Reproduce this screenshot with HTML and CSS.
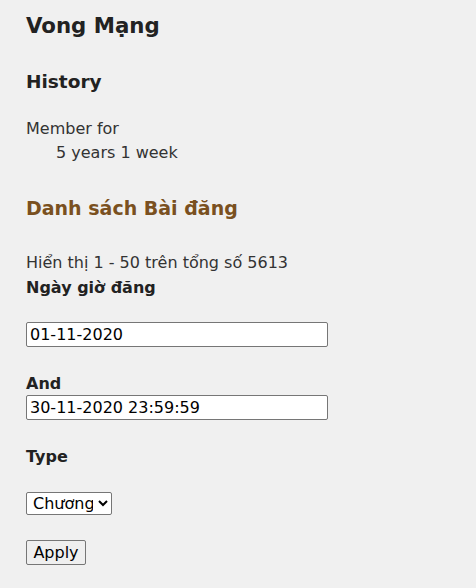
FILE: index.html
```html
<!DOCTYPE html>
<html lang="vi">
<head>
<meta charset="utf-8">
<title>Vong Mạng</title>
<link rel="stylesheet" href="styles.css">
</head>
<body>
<main class="page">
  <h1 class="title">Vong Mạng</h1>
  <h2 class="section-title">History</h2>
  <dl class="history">
    <dt>Member for</dt>
    <dd>5 years 1 week</dd>
  </dl>
  <h2 class="section-title brown">Danh sách Bài đăng</h2>
  <p class="count">Hiển thị 1 - 50 trên tổng số 5613</p>
  <form class="filter">
    <label class="label" for="from">Ngày giờ đăng</label>
    <input class="field field-gap" id="from" type="text" value="01-11-2020">
    <label class="label" for="to">And</label>
    <input class="field field-tight" id="to" type="text" value="30-11-2020 23:59:59">
    <label class="label label-type" for="type">Type</label>
    <select class="select" id="type"><option>Chương</option></select>
    <button class="button" type="button">Apply</button>
  </form>
</main>
</body>
</html>
```
FILE: styles.css
```css
html, body {
  margin: 0;
  padding: 0;
  background: #f0f0f0;
}
body {
  font-family: "DejaVu Sans", Verdana, sans-serif;
  font-size: 16px;
  color: #333;
}
.page {
  padding: 12px 26px 20px;
  display: flex;
  flex-direction: column;
  align-items: flex-start;
}
.title {
  margin: 0;
  font-size: 21.3px;
  line-height: 28px;
  color: #222;
}
.section-title {
  margin: 29px 0 0;
  font-size: 18.5px;
  line-height: 26px;
  color: #222;
}
.brown {
  color: #7a5020;
  font-size: 19px;
  margin-top: 30px;
}
.history {
  margin: 22px 0 0;
  line-height: 24px;
}
.history dt { margin: 0; }
.history dd { margin: 0 0 0 30px; }
.count {
  margin: 29px 0 0;
  line-height: 25px;
}
.filter {
  display: flex;
  flex-direction: column;
  align-items: flex-start;
}
.label {
  font-weight: bold;
  line-height: 25px;
  color: #222;
}
.field {
  font-family: "DejaVu Sans", Verdana, sans-serif;
  font-size: 16px;
  color: #000;
  width: 302px;
  height: 25px;
  box-sizing: border-box;
  margin: 0;
  padding: 1px 3px;
  border: 1px solid #767676;
  border-radius: 2px;
  background: #fff;
}
.field-gap { margin: 22px 0 24px; }
.field-tight { margin-top: -1px; }
.label-type { margin-top: 24px; }
.select {
  font-family: "DejaVu Sans", Verdana, sans-serif;
  font-size: 16px;
  color: #000;
  margin: 23px 0 0;
  height: 23px;
  width: 86px;
  border: 1px solid #767676;
  border-radius: 2px;
  background: #fff;
  padding: 0 2px;
}
.button {
  font-family: "DejaVu Sans", Verdana, sans-serif;
  font-size: 16px;
  color: #000;
  margin: 25px 0 0;
  height: 25px;
  width: 60px;
  padding: 0;
  border: 1px solid #767676;
  border-radius: 2px;
  background: #efefef;
}
```
